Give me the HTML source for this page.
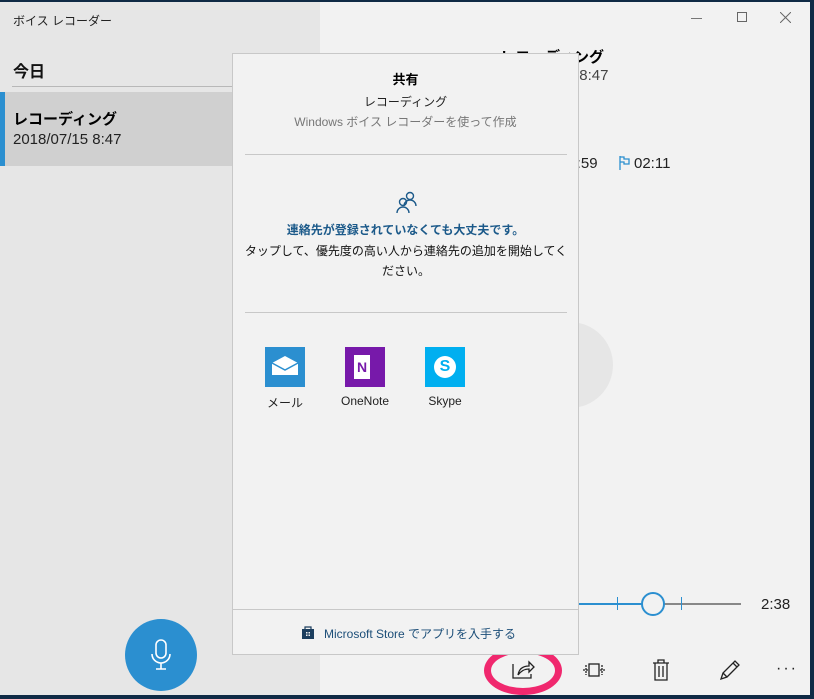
<!DOCTYPE html>
<html><head><meta charset="utf-8"><style>
*{margin:0;padding:0;box-sizing:border-box}
body{width:814px;height:699px;overflow:hidden;position:relative;background:#0f2a45;font-family:"Liberation Sans","Noto Sans CJK JP",sans-serif;color:#000}
.a{position:absolute}
</style></head><body>
<div class="a" style="left:0;top:2px;width:810px;height:693px;background:#f2f2f2"></div>
<div class="a" style="left:0;top:2px;width:320px;height:693px;background:#e6e6e6"></div>
<div class="a" style="left:13px;top:12px;font-size:12px;color:#222">ボイス レコーダー</div>
<div class="a" style="left:13px;top:58px;font-size:16px;font-weight:bold;color:#111">今日</div>
<div class="a" style="left:12px;top:86px;width:220px;height:1px;background:#b8b8b8"></div>
<div class="a" style="left:0;top:92px;width:232px;height:74px;background:#d0d0d0"></div>
<div class="a" style="left:0;top:92px;width:5px;height:74px;background:#2b8fd0"></div>
<div class="a" style="left:13px;top:108px;font-size:15px;font-weight:bold">レコーディング</div>
<div class="a" style="left:13px;top:131px;font-size:15px;color:#222">2018/07/15 8:47</div>
<div class="a" style="left:125px;top:619px;width:72px;height:72px;border-radius:50%;background:#2b8fd0"></div>
<svg class="a" style="left:149px;top:638px" width="24" height="34" viewBox="0 0 24 34" fill="none" stroke="#fff" stroke-width="1.6"><rect x="7" y="2" width="10" height="18" rx="5"/><path d="M3 16a9 9 0 0 0 18 0M12 25v6M7 31h10"/></svg>
<!-- right pane -->
<div class="a" style="left:691px;top:18px;width:11px;height:1px;background:#777"></div>
<div class="a" style="left:737px;top:12px;width:10px;height:10px;border:1px solid #666"></div>
<svg class="a" style="left:780px;top:12px" width="11" height="11"><path d="M0 0L11 11M11 0L0 11" stroke="#666" stroke-width="1"/></svg>
<div class="a" style="left:500px;top:46px;font-size:15px;font-weight:bold">レコーディング</div>
<div class="a" style="left:500px;top:67px;font-size:15px;color:#444">2018/07/15 8:47</div>
<div class="a" style="left:560px;top:155px;font-size:15px;color:#222">00:59</div>
<svg class="a" style="left:619px;top:156px" width="12" height="14"><path d="M1 0v14M1 1h4v2h5v5H5V6H1" fill="none" stroke="#2b8fd0" stroke-width="1.3"/></svg>
<div class="a" style="left:634px;top:155px;font-size:15px;color:#222">02:11</div>
<div class="a" style="left:527px;top:322px;width:86px;height:86px;border-radius:50%;background:#e6e6e6"></div>
<div class="a" style="left:560px;top:603px;width:93px;height:2px;background:#2b8fd0"></div>
<div class="a" style="left:653px;top:603px;width:88px;height:2px;background:#888"></div>
<div class="a" style="left:617px;top:597px;width:1px;height:13px;background:#2b8fd0"></div>
<div class="a" style="left:681px;top:597px;width:1px;height:13px;background:#2b8fd0"></div>
<div class="a" style="left:641px;top:592px;width:24px;height:24px;border-radius:50%;border:2px solid #2b8fd0;background:#f2f2f2"></div>
<div class="a" style="left:761px;top:596px;font-size:15px;color:#222">2:38</div>
<!-- bottom bar -->
<svg class="a" style="left:510px;top:658px" width="26" height="24" fill="none" stroke="#222" stroke-width="1.3"><path d="M3 6v14h18v-4M8 17c1-6 5-9 11-9V4l5 5-5 5v-3c-5 0-8 2-11 6"/></svg>
<div class="a" style="left:484px;top:646px;width:78px;height:49px;border-radius:50%;border:7px solid #f0286e"></div>
<svg class="a" style="left:582px;top:661px" width="24" height="18" fill="none" stroke="#222" stroke-width="1.3"><rect x="7" y="3" width="10" height="12"/><path d="M1 9h5M18 9h5M4 4v10M20 4v10" stroke-dasharray="2 1"/></svg>
<svg class="a" style="left:652px;top:659px" width="18" height="22" fill="none" stroke="#222" stroke-width="1.3"><path d="M1 4h16M6 4V1h6v3M3 4v17h12V4M7 7v11M11 7v11"/></svg>
<svg class="a" style="left:718px;top:658px" width="24" height="24" fill="none" stroke="#222" stroke-width="1.3"><path d="M3 21l2-6L17 3l4 4L9 19zM5 15l4 4M15 5l4 4"/></svg>
<div class="a" style="left:776px;top:660px;font-size:16px;letter-spacing:2px;color:#222">···</div>
<!-- popup -->
<div class="a" style="left:232px;top:53px;width:347px;height:602px;background:#f2f2f2;border:1px solid #c8c8c8"></div>
<div class="a" style="left:232px;top:69px;width:347px;text-align:center;font-size:13px;font-weight:bold">共有</div>
<div class="a" style="left:232px;top:93px;width:347px;text-align:center;font-size:12px;color:#222">レコーディング</div>
<div class="a" style="left:232px;top:113px;width:347px;text-align:center;font-size:12px;color:#777">Windows ボイス レコーダーを使って作成</div>
<div class="a" style="left:245px;top:154px;width:322px;height:1px;background:#c8c8c8"></div>
<svg class="a" style="left:395px;top:191px" width="24" height="24" fill="none" stroke="#1c5a8a" stroke-width="1.4"><circle cx="15" cy="5" r="3.5"/><path d="M9 15a6 6 0 0 1 12 0"/><circle cx="8" cy="11" r="3.5"/><path d="M2 22a6 6 0 0 1 12 0"/></svg>
<div class="a" style="left:232px;top:221px;width:347px;text-align:center;font-size:12px;font-weight:bold;color:#1c5a8a">連絡先が登録されていなくても大丈夫です。</div>
<div class="a" style="left:242px;top:241px;width:328px;text-align:center;font-size:12px;line-height:20px;color:#111">タップして、優先度の高い人から連絡先の追加を開始してください。</div>
<div class="a" style="left:245px;top:312px;width:322px;height:1px;background:#c8c8c8"></div>
<div class="a" style="left:265px;top:347px;width:40px;height:40px;background:#2b8fd0"></div>
<svg class="a" style="left:271px;top:355px" width="28" height="22"><path d="M1 8L14 1l13 7v12H1z" fill="#fff"/><path d="M1 8l13 7 13-7" fill="none" stroke="#2b8fd0" stroke-width="1.5"/></svg>
<div class="a" style="left:345px;top:347px;width:40px;height:40px;background:#7719aa"></div>
<div class="a" style="left:354px;top:355px;width:16px;height:24px;background:#fff;color:#7719aa;font-size:14px;font-weight:bold;text-align:center;line-height:24px">N</div>
<div class="a" style="left:425px;top:347px;width:40px;height:40px;background:#00aff0"></div>
<div class="a" style="left:434px;top:356px;width:22px;height:22px;border-radius:50%;background:#fff;color:#00aff0;font-size:16px;font-weight:bold;text-align:center;line-height:22px">S</div>
<div class="a" style="left:255px;top:394px;width:60px;text-align:center;font-size:12px;color:#222">メール</div>
<div class="a" style="left:335px;top:394px;width:60px;text-align:center;font-size:12px;color:#222">OneNote</div>
<div class="a" style="left:415px;top:394px;width:60px;text-align:center;font-size:12px;color:#222">Skype</div>
<div class="a" style="left:233px;top:609px;width:345px;height:1px;background:#c8c8c8"></div>
<svg class="a" style="left:301px;top:625px" width="14" height="14"><path d="M4 4V2h6v2" fill="none" stroke="#1c3e5e" stroke-width="1.2"/><rect x="1" y="4" width="12" height="10" fill="#1c3e5e"/><path d="M5 7h1.5v1.5H5zM7.5 7H9v1.5H7.5zM5 9.5h1.5V11H5zM7.5 9.5H9V11H7.5z" fill="#f2f2f2"/></svg>
<div class="a" style="left:324px;top:625px;font-size:12px;color:#1c4e78">Microsoft Store でアプリを入手する</div>
</body></html>
